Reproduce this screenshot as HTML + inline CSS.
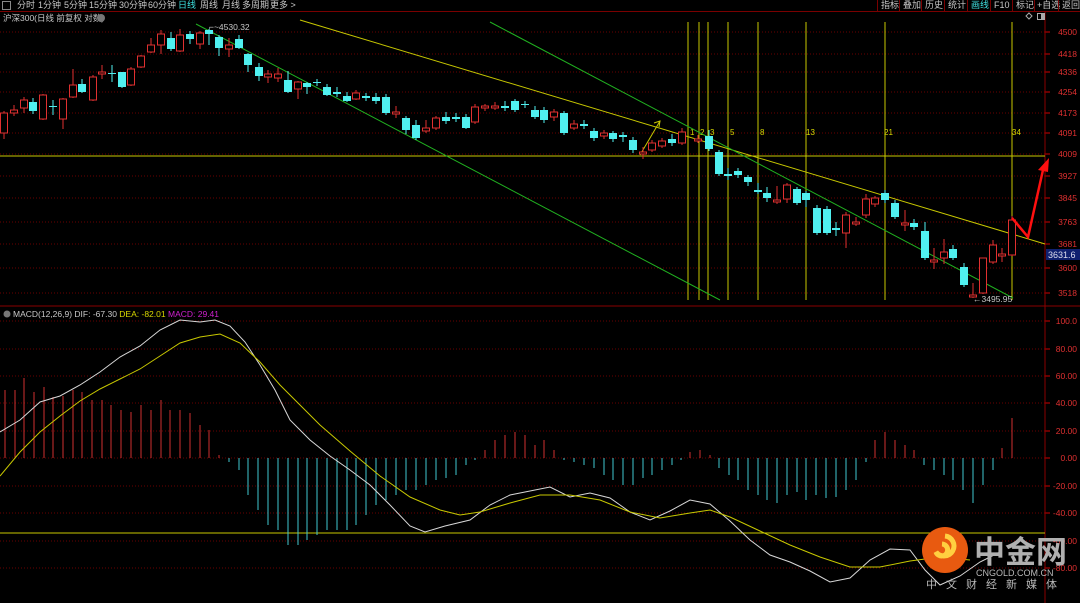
<!DOCTYPE html>
<html><head><meta charset="utf-8"><style>
html,body{margin:0;padding:0;background:#000;width:1080px;height:603px;overflow:hidden;font-family:"Liberation Sans","Noto Sans CJK SC",sans-serif}
#top{position:absolute;left:0;top:0;width:1080px;height:11px;border-bottom:1px solid #7a0000;font-size:9px;color:#c8c8c8;line-height:11px;white-space:nowrap}
#top span{position:absolute;top:0}
svg{position:absolute;left:0;top:0}
</style></head><body>
<div id="top">
<span style="left:2px;border:1px solid #888;width:7px;height:7px;top:1px"></span>
<span style="left:17px">分时</span><span style="left:38px">1分钟</span><span style="left:64px">5分钟</span><span style="left:89px">15分钟</span><span style="left:119px">30分钟</span><span style="left:148px">60分钟</span><span style="left:178px;color:#3ee0e0">日线</span><span style="left:200px">周线</span><span style="left:222px">月线</span><span style="left:242px">多周期</span><span style="left:270px">更多 &gt;</span>
<span style="left:877px;border-left:1px solid #7a0000;padding-left:3px">指标</span><span style="left:899px;border-left:1px solid #7a0000;padding-left:3px">叠加</span><span style="left:921px;border-left:1px solid #7a0000;padding-left:3px">历史</span><span style="left:944px;border-left:1px solid #7a0000;padding-left:3px">统计</span><span style="left:967px;border-left:1px solid #7a0000;padding-left:3px;color:#3ee0e0">画线</span><span style="left:990px;border-left:1px solid #7a0000;padding-left:3px">F10</span><span style="left:1012px;border-left:1px solid #7a0000;padding-left:3px">标记</span><span style="left:1034px;border-left:1px solid #7a0000;padding-left:2px">+自选</span><span style="left:1058px;border-left:1px solid #7a0000;padding-left:3px">返回</span>
</div>
<svg id="s" width="1080" height="603" xmlns="http://www.w3.org/2000/svg" font-family="Liberation Sans, Noto Sans CJK SC, sans-serif">
<text x="3" y="21" font-size="8.5" fill="#c8c8c8">沪深300(日线 前复权 对数)</text>
<circle cx="101" cy="18" r="4" fill="#777"/>
<g id="grid" stroke="#6a0000" stroke-dasharray="1,2" stroke-width="1"></g>
<line x1="1045" y1="12" x2="1045" y2="603" stroke="#8a0000"/>
<line x1="0" y1="306" x2="1080" y2="306" stroke="#8a0000"/>
<g id="axis" font-size="8.5" fill="#e03030"></g>
<rect x="1046" y="249" width="34" height="11" fill="#102070"/>
<text x="1048" y="258" font-size="9" fill="#dde">3631.6</text>
<path d="M1029 13 l3 3 l-3 3 l-3 -3z" fill="none" stroke="#aaa"/>
<rect x="1037.5" y="13.5" width="7" height="6" fill="none" stroke="#aaa"/>
<rect x="1041" y="14" width="3" height="5" fill="#aaa"/>
<g stroke="#c8c800" stroke-width="1">
<line x1="0" y1="156" x2="1045" y2="156"/>
<line x1="300" y1="20" x2="1045" y2="244"/>
<line x1="688" y1="22" x2="688" y2="300"/><line x1="699" y1="22" x2="699" y2="300"/><line x1="708" y1="22" x2="708" y2="300"/><line x1="728" y1="22" x2="728" y2="300"/><line x1="758" y1="22" x2="758" y2="300"/><line x1="806" y1="22" x2="806" y2="300"/><line x1="885" y1="22" x2="885" y2="300"/><line x1="1012" y1="22" x2="1012" y2="300"/>
<line x1="640" y1="155" x2="660" y2="121"/><path d="M654 123 L660 121 L659 127" fill="none"/>
<line x1="0" y1="533" x2="1045" y2="533"/>
</g>
<g font-size="8" fill="#d8d800"><text x="690" y="135">1</text><text x="700" y="135">2</text><text x="710" y="135">3</text><text x="730" y="135">5</text><text x="760" y="135">8</text><text x="806" y="135">13</text><text x="884" y="135">21</text><text x="1012" y="135">34</text></g>
<g stroke="#20b020" stroke-width="1"><line x1="490" y1="22" x2="1013" y2="298"/><line x1="196" y1="24" x2="720" y2="300"/></g>
<g id="c"></g>
<path d="M1012 218 L1028 237 L1043 170" fill="none" stroke="#ff1010" stroke-width="2.5"/>
<path d="M1049 158 L1038 170 L1048 172z" fill="#ff1010"/>
<text x="209" y="30" font-size="8.5" fill="#c8c8c8">⌐~4530.32</text>
<text x="973" y="302" font-size="8.5" fill="#c8c8c8">←3495.95</text>
<circle cx="7" cy="314" r="3.5" fill="#777"/>
<text x="13" y="317" font-size="8.5" fill="#c8c8c8">MACD(12,26,9)  DIF: -67.30 <tspan fill="#d8d800">DEA: -82.01</tspan> <tspan fill="#d020d0">MACD: 29.41</tspan></text>
<g id="h"></g>
<polyline fill="none" stroke="#d8d8d8" stroke-width="1" points="0,432 20,420 40,402 60,396 80,385 100,372 120,357 140,346 160,330 180,320 200,322 215,320 230,326 245,342 260,365 275,390 290,420 310,440 330,456 350,470 370,485 390,505 410,526 425,532 445,526 470,520 490,505 510,495 530,491 550,487 570,497 590,493 610,498 630,512 650,520 670,511 690,500 710,504 730,521 750,540 770,555 790,562 810,571 830,582 850,578 870,560 890,549 910,550 925,570 940,585 960,576 980,562 1000,552"/>
<polyline fill="none" stroke="#c8c800" stroke-width="1" points="0,476 20,452 40,432 60,416 80,401 100,389 120,379 140,369 160,356 180,343 200,337 220,334 240,343 260,362 280,385 300,405 320,425 350,451 380,476 410,497 440,510 460,515 480,512 510,503 540,495 570,495 600,500 630,512 660,518 690,513 710,510 730,517 760,531 790,545 820,557 850,567 880,567 910,561 940,557 970,560"/>
<circle cx="945" cy="550" r="23" fill="#e85a10"/>
<path d="M945 536 a10 10 0 1 1 -9 16 a6 6 0 1 0 6 -8" fill="none" stroke="#ffd040" stroke-width="5"/>
<text x="974" y="563" font-size="31" font-weight="bold" fill="#b0b0b0" font-family="Noto Sans CJK SC, sans-serif">中金网</text>
<text x="976" y="576" font-size="9" fill="#b8b8b8">CNGOLD.COM.CN</text>
<text x="926" y="588" font-size="11" fill="#b8b8b8" letter-spacing="9" font-family="Noto Sans CJK SC, sans-serif">中文财经新媒体</text>
</svg>
<script>
var NS="http://www.w3.org/2000/svg";
function el(p,t,a){var e=document.createElementNS(NS,t);for(var k in a)e.setAttribute(k,a[k]);p.appendChild(e);return e;}
var g=document.getElementById('grid'),ax=document.getElementById('axis');
[[32,'4500'],[54,'4418'],[72,'4336'],[92,'4254'],[113,'4173'],[133,'4091'],[154,'4009'],[176,'3927'],[198,'3845'],[222,'3763'],[244,'3681'],[268,'3600'],[293,'3518'],
[321,'100.0'],[349,'80.00'],[376,'60.00'],[403,'40.00'],[431,'20.00'],[458,'0.00'],[486,'-20.00'],[513,'-40.00'],[541,'-60.00'],[568,'-80.00']].forEach(function(a){
el(g,'line',{x1:0,y1:a[0],x2:1045,y2:a[0]});el(g,'line',{x1:1045,y1:a[0],x2:1050,y2:a[0],'stroke-dasharray':'none',stroke:'#c00'});
var t=el(ax,'text',{x:1077,y:a[0]+3,'text-anchor':'end'});t.textContent=a[1];});
var C=[[4,113,133,1,111,139],[14,110,113,1,105,116],[24,100,108,1,97,113],[33,102,111,0,98,114],[43,95,119,1,94,120],[53,106,107,0,100,115],[63,99,119,1,98,129],[73,85,97,1,69,98],[82,84,92,0,79,93],[93,77,100,1,75,101],[102,72,74,1,65,79],[112,73,74,0,65,82],[122,72,87,0,72,88],[131,69,85,1,67,86],[141,56,67,1,55,68],[151,45,52,1,38,53],[161,34,45,1,30,54],[171,38,49,0,32,51],[180,35,51,1,29,52],[190,34,39,0,31,44],[200,33,44,1,31,49],[209,30,34,0,29,45],[219,37,48,0,35,56],[229,45,49,1,38,57],[239,39,48,0,35,49],[248,54,65,0,53,72],[259,67,76,0,63,81],[268,74,77,1,70,83],[278,74,78,1,68,82],[288,80,92,0,71,93],[298,82,89,1,81,99],[307,83,87,0,82,94],[317,82,83,0,79,86],[327,87,95,0,84,96],[337,92,94,0,87,97],[347,96,101,0,92,102],[356,93,99,1,90,100],[366,96,98,0,93,101],[376,97,101,0,93,104],[386,97,113,0,94,115],[396,112,114,1,106,118],[406,118,130,0,116,134],[416,125,138,0,120,140],[426,128,131,1,120,133],[436,118,128,1,116,130],[446,117,121,0,112,124],[456,117,119,0,113,122],[466,117,128,0,114,129],[475,107,122,1,104,124],[485,106,108,1,104,111],[495,106,108,1,102,110],[505,106,108,0,101,111],[515,101,110,0,99,112],[525,104,105,0,101,108],[535,110,117,0,106,119],[544,110,120,0,107,123],[554,112,117,1,109,121],[564,113,133,0,111,135],[574,124,128,1,120,130],[584,124,126,0,120,129],[594,131,138,0,128,141],[604,133,136,1,130,139],[613,133,139,0,131,142],[623,135,137,0,132,142],[633,140,150,0,137,153],[643,152,154,1,147,159],[652,143,150,1,140,152],[662,141,146,1,138,148],[672,139,143,0,134,146],[682,132,143,1,128,145],[698,139,141,1,135,143],[709,136,149,0,130,151],[719,152,174,0,150,176],[728,174,176,0,168,180],[738,171,175,0,168,178],[748,177,182,0,175,186],[758,190,192,0,183,194],[767,193,198,0,187,202],[777,200,202,1,186,204],[787,185,199,1,183,203],[797,189,203,0,187,205],[806,193,200,0,191,207],[817,208,233,0,205,235],[827,209,233,0,206,235],[836,228,230,0,222,236],[846,215,233,1,212,248],[856,222,224,1,217,226],[866,199,215,1,194,218],[875,198,204,1,196,207],[885,193,200,0,190,203],[895,203,217,0,200,219],[905,223,225,1,210,231],[914,223,227,0,219,230],[925,231,258,0,222,260],[934,260,262,1,248,269],[944,252,258,1,239,264],[953,249,258,0,245,260],[964,267,285,0,263,287],[973,295,297,1,283,298],[983,258,293,1,258,294],[993,245,262,1,240,264],[1002,254,256,1,248,262],[1012,220,255,1,216,256]];
var c=document.getElementById('c');
C.forEach(function(a){var col=a[3]?'#e03030':'#50f0f0';var x=a[0];
el(c,'line',{x1:x,y1:a[4],x2:x,y2:a[5],stroke:col});
var h=Math.max(a[2]-a[1],1);
if(a[3])el(c,'rect',{x:x-3.5,y:a[1],width:7,height:h,fill:'#000',stroke:col});
else el(c,'rect',{x:x-4,y:a[1],width:8,height:h,fill:col});});
var H=[[5,390],[15,390],[24,378],[34,392],[44,387],[53,397],[63,396],[73,390],[82,392],[92,400],[102,400],[111,405],[121,410],[131,412],[141,405],[151,410],[161,400],[170,410],[180,410],[190,413],[200,425],[209,430],[219,455],[229,462],[239,470],[248,495],[258,510],[268,525],[278,530],[288,545],[298,545],[307,540],[317,535],[327,530],[337,530],[347,530],[356,525],[366,515],[376,505],[386,500],[396,495],[406,490],[416,490],[426,485],[436,480],[446,478],[456,475],[466,465],[475,460],[485,450],[495,440],[505,435],[515,432],[525,435],[535,445],[544,440],[554,450],[564,460],[574,462],[584,465],[594,468],[604,475],[613,480],[623,485],[633,485],[643,478],[652,475],[662,470],[672,465],[681,460],[690,452],[700,450],[710,455],[719,468],[729,475],[738,480],[748,490],[758,495],[767,500],[777,503],[787,495],[797,492],[806,500],[816,495],[826,498],[836,497],[846,490],[856,480],[866,462],[875,440],[885,432],[895,440],[905,445],[914,450],[924,465],[934,470],[944,475],[953,480],[963,490],[973,503],[983,485],[993,470],[1002,448],[1012,418]];
var hh=document.getElementById('h');
H.forEach(function(a){var col=a[1]<458?'#d03030':'#40c8d0';el(hh,'line',{x1:a[0],y1:458,x2:a[0],y2:a[1],stroke:col});});
</script>
</body></html>
